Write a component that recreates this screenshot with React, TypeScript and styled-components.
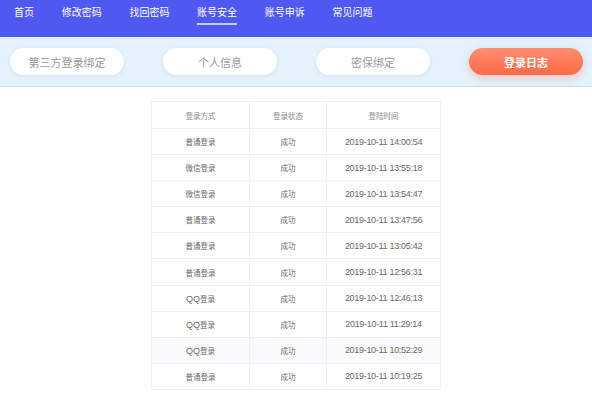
import React from "react";
import styled, { createGlobalStyle } from "styled-components";

const Global = createGlobalStyle`
  html, body { margin: 0; padding: 0; background: #ffffff; }
  body { font-family: "Liberation Sans", "Noto Sans CJK SC", sans-serif; }
  * { box-sizing: border-box; }
`;

const Nav = styled.nav`
  height: 37px;
  background: #5058f2;
  display: flex;
  align-items: flex-start;
`;

const NavItem = styled.div<{ $active?: boolean }>`
  display: flex;
  flex-direction: column;
  align-items: stretch;
  padding: 7px 14px 0 14px;
  margin-right: -0.3px;
  color: #ffffff;
  font-size: 10px;
  line-height: 12px;
  white-space: nowrap;
  &::after {
    content: "";
    display: block;
    height: 2px;
    margin-top: 4px;
    background: ${(p) => (p.$active ? "#c9ccf8" : "transparent")};
  }
`;

const TabStrip = styled.div`
  height: 50px;
  background: #e4f2fd;
  border-bottom: 1px solid #bfe3fb;
  display: flex;
  align-items: center;
  gap: 39px;
  padding-left: 10px;
`;

const Pill = styled.div<{ $active?: boolean }>`
  width: 114px;
  height: 27px;
  border-radius: 14px;
  display: flex;
  align-items: center;
  justify-content: center;
  font-size: 11px;
  font-weight: ${(p) => (p.$active ? 700 : 400)};
  color: ${(p) => (p.$active ? "#ffffff" : "#9a9a9a")};
  background: ${(p) =>
    p.$active ? "linear-gradient(180deg, #ff8e70 0%, #ff6a48 100%)" : "#ffffff"};
  box-shadow: ${(p) =>
    p.$active ? "0 3px 8px rgba(255, 110, 80, 0.35)" : "0 1px 4px rgba(120, 150, 190, 0.18)"};
`;

const Table = styled.table`
  margin: 14px auto 0 auto;
  width: 289px;
  border-collapse: collapse;
  table-layout: fixed;
`;

const Th = styled.th`
  height: 27px;
  border: 1px solid #eef0f6;
  font-size: 7.5px;
  font-weight: 400;
  color: #8a8a8a;
  text-align: center;
  padding: 0;
`;

const Tr = styled.tr<{ $shade?: boolean }>`
  background: ${(p) => (p.$shade ? "#fbfbfd" : "#ffffff")};
`;

const Td = styled.td<{ $time?: boolean }>`
  height: 26.1px;
  border: 1px solid #eef0f6;
  font-size: ${(p) => (p.$time ? "9px" : "7.5px")};
  letter-spacing: ${(p) => (p.$time ? "-0.3px" : "0")};
  color: #6a6a6a;
  text-align: center;
  padding: 0;
  white-space: nowrap;
`;

const Latin = styled.span`
  font-size: 9px;
`;

const navItems = ["首页", "修改密码", "找回密码", "账号安全", "账号申诉", "常见问题"];
const tabs = ["第三方登录绑定", "个人信息", "密保绑定", "登录日志"];
const rows: [string, string, string][] = [
  ["普通登录", "成功", "2019-10-11 14:00:54"],
  ["微信登录", "成功", "2019-10-11 13:55:18"],
  ["微信登录", "成功", "2019-10-11 13:54:47"],
  ["普通登录", "成功", "2019-10-11 13:47:56"],
  ["普通登录", "成功", "2019-10-11 13:05:42"],
  ["普通登录", "成功", "2019-10-11 12:56:31"],
  ["QQ登录", "成功", "2019-10-11 12:46:13"],
  ["QQ登录", "成功", "2019-10-11 11:29:14"],
  ["QQ登录", "成功", "2019-10-11 10:52:29"],
  ["普通登录", "成功", "2019-10-11 10:19:25"],
];

function Method({ text }: { text: string }) {
  const m = text.match(/^([A-Za-z]+)(.*)$/);
  if (!m) return <>{text}</>;
  return (
    <>
      <Latin>{m[1]}</Latin>
      {m[2]}
    </>
  );
}

export default function App() {
  return (
    <>
      <Global />
      <Nav>
        {navItems.map((n) => (
          <NavItem key={n} $active={n === "账号安全"}>
            {n}
          </NavItem>
        ))}
      </Nav>
      <TabStrip>
        {tabs.map((t) => (
          <Pill key={t} $active={t === "登录日志"}>
            {t}
          </Pill>
        ))}
      </TabStrip>
      <Table>
        <colgroup>
          <col style={{ width: 98 }} />
          <col style={{ width: 77 }} />
          <col style={{ width: 114 }} />
        </colgroup>
        <thead>
          <tr>
            <Th>登录方式</Th>
            <Th>登录状态</Th>
            <Th>登陆时间</Th>
          </tr>
        </thead>
        <tbody>
          {rows.map((r, i) => (
            <Tr key={i} $shade={i === 8}>
              <Td>
                <Method text={r[0]} />
              </Td>
              <Td>{r[1]}</Td>
              <Td $time>{r[2]}</Td>
            </Tr>
          ))}
        </tbody>
      </Table>
    </>
  );
}
